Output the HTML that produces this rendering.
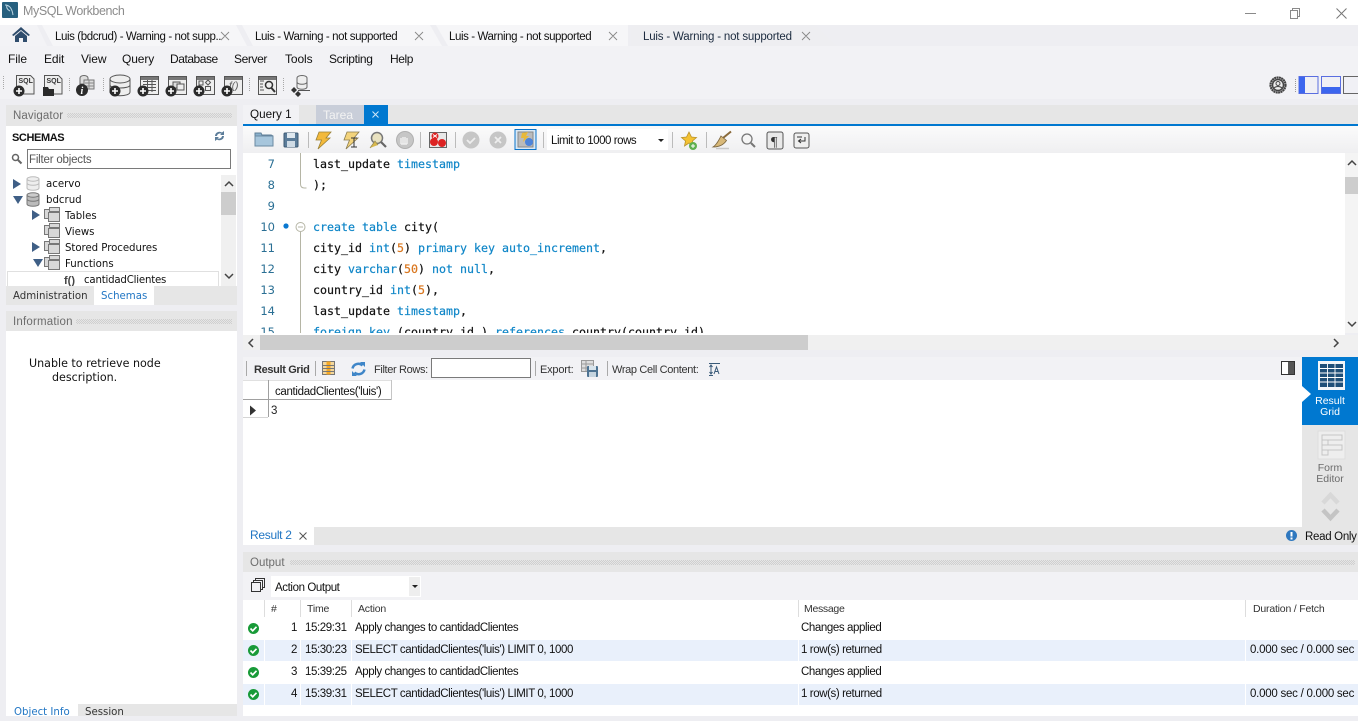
<!DOCTYPE html>
<html><head><meta charset="utf-8"><title>MySQL Workbench</title>
<style>
html,body{margin:0;padding:0;width:1358px;height:716px;overflow:hidden;background:#eeeef2;font-family:"Liberation Sans",sans-serif;font-size:12px;color:#111}
.a{position:absolute}
.t{position:absolute;white-space:pre;line-height:16px;height:16px}
.s{font-size:11.5px;letter-spacing:-.4px}
.r{font-size:11px;letter-spacing:-.35px;color:#333}
.h{font-size:10.5px;letter-spacing:-.2px;color:#333}
.m{font-family:"DejaVu Sans Mono",monospace;font-size:11.63px;line-height:16px;color:#111;position:absolute;white-space:pre;left:313px;-webkit-text-stroke:.2px}
.m b{font-weight:normal;color:#0f86c8}.m i{font-style:normal;color:#d9751c}
.n{font-family:"DejaVu Sans",sans-serif;font-size:11.5px;color:#2a6f94;position:absolute;width:34px;text-align:right;left:241px;line-height:16px}
.d{font-family:"DejaVu Sans",sans-serif;font-size:10.2px}
.hd{position:absolute;background:#e6e6e6;color:#6d6d6d;font-size:12px}
.dots{position:absolute;height:5px;background:conic-gradient(#cfcfcf 25%,transparent 0 50%,#cfcfcf 0 75%,transparent 0);background-size:2px 2px}
.row{position:absolute;left:265px;width:1093px;height:21px;background:#e9f0fb}
.sep{position:absolute;width:1px;background:#a9a9a9}
svg{position:absolute;overflow:visible}
</style></head><body>

<!-- title bar -->
<div class="a" style="left:0;top:0;width:1358px;height:25px;background:#fff"></div>
<svg style="left:2px;top:2px" width="16" height="16" viewBox="0 0 16 16"><rect width="16" height="16" rx="1" fill="#27607f"/><path d="M3 3c4 0 7 3 8 10M5 3c-1 3 1 5 3 6" stroke="#bcd6e3" stroke-width="1" fill="none"/></svg>
<div class="t" style="left:23px;top:3px;font-size:12.5px;letter-spacing:-.42px;color:#8c8c8c">MySQL Workbench</div>
<svg style="left:1245px;top:13px" width="12" height="2"><rect width="11" height="1" fill="#8a8a8a"/></svg>
<svg style="left:1290px;top:8px" width="12" height="11" viewBox="0 0 12 11"><path d="M.5 2.500h7v8h-7zM2.500 2.500v-2h7v8h-2" fill="none" stroke="#8a8a8a"/></svg>
<svg style="left:1336px;top:8px" width="11" height="11" viewBox="0 0 11 11"><path d="M.5.5l10 10M10.500.5l-10 10" stroke="#777" stroke-width="1"/></svg>

<!-- tab strip -->
<div class="a" style="left:0;top:46px;width:1358px;height:53px;background:#f2f2f5"></div>
<svg style="left:0;top:25px" width="1358" height="21">
<path d="M0 0H37L47 21H0Z" fill="#f3f3f6"/>
<path d="M42 0H236L247 21H53Z" fill="#f6f6f8"/>
<path d="M242 0H430L442 21H253Z" fill="#f6f6f8"/>
<path d="M436 0H628V21H448Z" fill="#f6f6f8"/>
<path d="M631 4Q631 0 637 0H815L837 21H631Z" fill="#eeeef1"/>
</svg>
<svg style="left:12px;top:27px" width="18" height="15" viewBox="0 0 18 15"><path d="M0 8L9 0l9 8-1.500 1L9 3 1.500 9z" fill="#2f4d6d"/><path d="M3 9l6-5 6 5v6h-4v-4H7v4H3z" fill="#2f4d6d"/></svg>
<div class="t s" style="left:55px;top:29px">Luis (bdcrud) - Warning - not supp..</div>
<div class="t s" style="left:255px;top:29px">Luis - Warning - not supported</div>
<div class="t s" style="left:449px;top:29px">Luis - Warning - not supported</div>
<div class="t s" style="left:643px;top:29px;color:#1c2b3f;letter-spacing:-.18px">Luis - Warning - not supported</div>
<svg style="left:221px;top:32px" width="600" height="9" fill="none" stroke="#888" stroke-width=".9"><path d="M0 0l8 8M8 0l-8 8M194 0l8 8M202 0l-8 8M388 0l8 8M396 0l-8 8M581 0l8 8M589 0l-8 8"/></svg>

<!-- menu -->
<div class="t" style="left:8px;top:51px;letter-spacing:-.1px">File</div>
<div class="t" style="left:44px;top:51px;letter-spacing:-.1px">Edit</div>
<div class="t" style="left:81px;top:51px;letter-spacing:-.1px">View</div>
<div class="t" style="left:122px;top:51px;letter-spacing:-.1px">Query</div>
<div class="t" style="left:170px;top:51px;letter-spacing:-.45px">Database</div>
<div class="t" style="left:234px;top:51px;letter-spacing:-.4px">Server</div>
<div class="t" style="left:285px;top:51px;letter-spacing:-.1px">Tools</div>
<div class="t" style="left:329px;top:51px;letter-spacing:-.35px">Scripting</div>
<div class="t" style="left:390px;top:51px;letter-spacing:-.4px">Help</div>

<!-- main toolbar -->
<svg style="left:0;top:70px" width="340" height="30" viewBox="0 0 340 30">
<defs>
<g id="plus"><circle r="5.500" fill="#2b2b2b"/><path d="M-3 0h6M0-3v6" stroke="#fff" stroke-width="1.600"/></g>
<g id="win"><rect x=".5" y=".5" width="18" height="18" fill="#eee" stroke="#555"/><rect x="1" y="1" width="17" height="3" fill="#777"/></g>
</defs>
<g stroke="#a8a8a8" stroke-dasharray="1 1" stroke-width="1"><path d="M3.500 6v14M69.500 8v14M103.500 8v14M249.500 8v14M283.500 8v14"/></g>
<path d="M16.500 5.500h14l3.500 3.500v15h-17.500z" fill="#eee" stroke="#555"/><text x="18.500" y="13" font-size="7" font-weight="bold" fill="#333">SQL</text><use href="#plus" x="19" y="21"/>
<path d="M44.500 5.500h14l3.500 3.500v15h-17.500z" fill="#eee" stroke="#555"/><text x="46.500" y="13" font-size="7" font-weight="bold" fill="#333">SQL</text><path d="M43 17h5l1 2h5v7H43z" fill="#2b2b2b"/>
<ellipse cx="84" cy="8" rx="4" ry="2.500" fill="#ddd" stroke="#666"/><path d="M80 8v6h8V8" fill="#ddd" stroke="#666"/><rect x="84" y="10" width="10" height="9" fill="#ddd" stroke="#777"/><path d="M85 13h9M85 16h9M89 10v9" stroke="#888"/><circle cx="82" cy="20" r="6" fill="#2b2b2b"/><text x="80.500" y="24" font-size="10" font-weight="bold" font-style="italic" fill="#fff" font-family="Liberation Serif">i</text>
<path d="M110 9v13c0 5 20 5 20 0V9" fill="#eee" stroke="#555"/><ellipse cx="120" cy="9" rx="10" ry="4" fill="#eee" stroke="#555"/><path d="M110 15c0 4 20 4 20 0" fill="none" stroke="#555"/><use href="#plus" x="115" y="21"/>
<use href="#win" x="140" y="6"/><path d="M143 11.500h13M143 14.500h13M143 17.500h13M143 20.500h13M147.500 10v12M152 10v12" stroke="#555" stroke-width="1"/><use href="#plus" x="143" y="21"/>
<use href="#win" x="168" y="6"/><rect x="173" y="12" width="7" height="6" fill="#ddd" stroke="#555"/><rect x="177" y="14" width="7" height="6" fill="#eee" stroke="#555"/><use href="#plus" x="171" y="21"/>
<use href="#win" x="196" y="6"/><rect x="199" y="11" width="4" height="4" fill="#eee" stroke="#555"/><path d="M208 10l2.500 2.500-2.500 2.500-2.500-2.500z" fill="#eee" stroke="#555"/><rect x="205.500" y="16.500" width="5" height="4" fill="#eee" stroke="#555"/><use href="#plus" x="199" y="21"/>
<use href="#win" x="224" y="6"/><text x="229" y="19" font-size="10" fill="#555" font-style="italic">f()</text><use href="#plus" x="227" y="21"/>
<use href="#win" x="258" y="6"/><path d="M260 11h4M260 14h3M260 17h3M260 20h4" stroke="#555"/><circle cx="269" cy="15" r="3.500" fill="#eee" stroke="#333" stroke-width="1.500"/><path d="M271.500 18l3.500 4" stroke="#333" stroke-width="2"/>
<ellipse cx="302" cy="8" rx="5" ry="2.500" fill="#eee" stroke="#666"/><path d="M297 8v9c0 3 10 3 10 0V8M297 12c0 3 10 3 10 0" fill="#eee" stroke="#666"/><path d="M298 20.500h12" stroke="#555"/><path d="M294 17l3 3-3 3-3-3zM298 21l3 3-3 3-3-3z" fill="#333"/>
</svg>

<!-- right layout toggles -->
<svg style="left:1269px;top:76px" width="89" height="20" viewBox="0 0 89 20">
<circle cx="9" cy="9" r="7.500" fill="none" stroke="#444" stroke-width="2.200" stroke-dasharray="2 .4"/><circle cx="9" cy="9" r="5.500" fill="#eee" stroke="#444" stroke-width="1.500"/><circle cx="9" cy="7.500" r="2" fill="none" stroke="#444"/><path d="M5 12c2-2 6-2 8 0" fill="none" stroke="#444"/>
<path d="M26.500 3v14" stroke="#999" stroke-dasharray="1 1"/>
<rect x="30" y=".5" width="19" height="17" fill="#f0f0f5" stroke="#5a6ee0"/><rect x="30" y="1" width="6" height="16" fill="#3c66ee"/>
<rect x="52.500" y=".5" width="19" height="17" fill="#f0f0f5" stroke="#5a6ee0"/><rect x="53" y="11" width="18" height="6" fill="#3c66ee"/>
<rect x="74.500" y=".5" width="19" height="17" fill="#f0f0f5" stroke="#666"/>
</svg>

<!-- Navigator panel -->
<div class="a" style="left:6px;top:105px;width:231px;height:611px;background:#fff"></div>
<div class="hd" style="left:6px;top:105px;width:231px;height:21px"></div>
<div class="t" style="left:13px;top:108px;color:#6d6d6d;font-size:11.5px;letter-spacing:.1px">Navigator</div>
<div class="dots" style="left:67px;top:113px;width:165px"></div>
<div class="t" style="left:12px;top:130px;font-weight:bold;font-size:11px;letter-spacing:-.4px;color:#111">SCHEMAS</div>
<svg style="left:213px;top:130px" width="13" height="12" viewBox="0 0 13 12"><path d="M2 6a4.500 4.500 0 0 1 7-3.500L11 1v4H7l1.500-1.200A3 3 0 0 0 4 6zM11 6a4.500 4.500 0 0 1-7 3.500L2 11V7h4L4.500 8.200A3 3 0 0 0 9 6z" fill="#5b7c99"/></svg>
<svg style="left:11px;top:153px" width="12" height="12" viewBox="0 0 12 12"><circle cx="4.500" cy="4.500" r="3" fill="none" stroke="#666" stroke-width="1.500"/><path d="M7 7l3.500 3.500" stroke="#666" stroke-width="2"/></svg>
<div class="a" style="left:27px;top:149px;width:202px;height:18px;border:1px solid #7a7a7a;background:#fff"></div>
<div class="t" style="left:29px;top:152px;color:#555;font-size:11.500px;letter-spacing:-.2px">Filter objects</div>

<div class="a" style="left:221px;top:175px;width:15px;height:111px;background:#f0f0f0"></div>
<div class="a" style="left:221px;top:192px;width:15px;height:23px;background:#cdcdcd"></div>
<svg style="left:224px;top:180px" width="10" height="100" fill="none" stroke="#444" stroke-width="1.500"><path d="M1 6l4-4 4 4M1 94l4 4 4-4"/></svg>

<svg style="left:12px;top:176px" width="180" height="100" viewBox="0 0 180 100">
<path d="M1 3l8 5-8 5z" fill="#3f5f86"/><path d="M1 20h10l-5 8z" fill="#3f5f86"/>
<path d="M15 3v9c0 3 12 3 12 0V3" fill="#eee" stroke="#bbb"/><ellipse cx="21" cy="3" rx="6" ry="2.200" fill="#eee" stroke="#bbb"/><path d="M15 7c0 3 12 3 12 0" fill="none" stroke="#bbb"/>
<path d="M15 19v9c0 3 12 3 12 0V19" fill="#bbb" stroke="#777"/><ellipse cx="21" cy="19" rx="6" ry="2.200" fill="#ccc" stroke="#777"/><path d="M15 23c0 3 12 3 12 0" fill="none" stroke="#777"/>
<path d="M20 34l8 5-8 5zM20 66l8 5-8 5z" fill="#3f5f86"/><path d="M21 83h10l-5 8z" fill="#3f5f86"/>
<g fill="#d8d8d8" stroke="#777"><rect x="32.500" y="33.500" width="10" height="9"/><rect x="37.500" y="31.500" width="10" height="4"/><rect x="36.500" y="36.500" width="11" height="9"/>
<rect x="32.500" y="49.500" width="10" height="9"/><rect x="37.500" y="47.500" width="10" height="4"/><rect x="36.500" y="52.500" width="11" height="9"/>
<rect x="32.500" y="65.500" width="10" height="9"/><rect x="37.500" y="63.500" width="10" height="4"/><rect x="36.500" y="68.500" width="11" height="9"/>
<rect x="32.500" y="81.500" width="10" height="9"/><rect x="37.500" y="79.500" width="10" height="4"/><rect x="36.500" y="84.500" width="11" height="9"/></g>
</svg>
<div class="t d" style="left:46px;top:177px">acervo</div>
<div class="t d" style="left:46px;top:193px">bdcrud</div>
<div class="t d" style="left:65px;top:209px">Tables</div>
<div class="t d" style="left:65px;top:225px">Views</div>
<div class="t d" style="left:65px;top:241px;letter-spacing:-.05px">Stored Procedures</div>
<div class="t d" style="left:65px;top:257px">Functions</div>
<div class="a" style="left:7px;top:271px;width:212px;height:15px;border:1px solid #e0e0e0;border-bottom:0;box-sizing:border-box"></div>
<div class="t" style="left:64px;top:273px;font-weight:bold;font-size:11px;color:#444">f()</div>
<div class="t d" style="left:84px;top:273px;letter-spacing:-.2px">cantidadClientes</div>

<div class="a" style="left:6px;top:286px;width:231px;height:19px;background:#e6e6e6"></div>
<div class="a" style="left:94px;top:286px;width:60px;height:19px;background:#fff"></div>
<div class="t d" style="left:13px;top:289px;color:#333">Administration</div>
<div class="t d" style="left:101px;top:289px;color:#2176c4">Schemas</div>
<div class="a" style="left:6px;top:305px;width:231px;height:6px;background:#eeeef2"></div>
<div class="hd" style="left:6px;top:311px;width:231px;height:20px"></div>
<div class="t" style="left:13px;top:314px;color:#6d6d6d;font-size:11.500px;letter-spacing:.2px">Information</div>
<div class="dots" style="left:76px;top:319px;width:156px"></div>
<div class="t d" style="left:29px;top:356px;font-size:11.100px;color:#111">Unable to retrieve node</div>
<div class="t d" style="left:52px;top:370px;font-size:11.100px;color:#111">description.</div>
<div class="a" style="left:6px;top:704px;width:231px;height:12px;background:#e6e6e6"></div>
<div class="a" style="left:6px;top:704px;width:72px;height:12px;background:#fff"></div>
<div class="t d" style="left:14px;top:705px;color:#2176c4">Object Info</div>
<div class="t d" style="left:85px;top:705px;color:#333">Session</div>

<!-- query tab bar -->
<div class="a" style="left:243px;top:105px;width:1115px;height:19px;background:#e6e6e6"></div>
<div class="a" style="left:243px;top:124px;width:1115px;height:2px;background:#0078d0"></div>
<div class="a" style="left:243px;top:105px;width:56px;height:19px;background:#f2f2f5"></div>
<div class="t" style="left:250px;top:107px;font-size:11.700px">Query 1</div>
<div class="a" style="left:316px;top:105px;width:48px;height:19px;background:#c9ced9"></div>
<div class="t" style="left:323px;top:107px;color:#f3f3f3">Tarea</div>
<div class="a" style="left:364px;top:105px;width:24px;height:19px;background:#0078d0"></div>
<svg style="left:372px;top:111px" width="8" height="8"><path d="M.5.5l6 6M6.500.5l-6 6" stroke="#cfe6f7" stroke-width="1"/></svg>

<!-- query toolbar -->
<div class="a" style="left:243px;top:126px;width:1115px;height:27px;background:linear-gradient(#fbfbfb,#efeff1)"></div>
<svg style="left:243px;top:126px" width="580" height="27" viewBox="0 0 580 27">
<path d="M12 7h6l1 2h9c1 0 2 1 2 2v9H12z" fill="#8ab0cc" stroke="#5f7f98"/><rect x="12" y="10" width="18" height="10" fill="#a7c6dc" stroke="#6b8aa2"/>
<rect x="41" y="7" width="14" height="14" rx="1" fill="#5b7c99" stroke="#3e5a74"/><rect x="44" y="7" width="8" height="5" fill="#dfe8ef"/><rect x="44" y="15" width="8" height="6" fill="#cfdbe5"/>
<path d="M65.500 6v16M177.500 6v16M212.500 6v16M300.500 6v16M429.500 6v16M463.500 6v16" stroke="#bbb"/>
<path d="M76 6H88L83 12H87L75 23L78.500 14H73Z" fill="#f3b93b" stroke="#9a8137" stroke-width=".8"/>
<path d="M104 6H116L111 12H115L103 23L106.500 14H101Z" fill="#f3d37b" stroke="#8a7b4d" stroke-width=".8"/><path d="M108 12h6M111 12v9M108 21h6" stroke="#333" stroke-width="1"/>
<circle cx="134" cy="12" r="5.500" fill="#e9e2c0" stroke="#777" stroke-width="1.500"/><path d="M138 16l5 5" stroke="#666" stroke-width="2.200"/><path d="M127 22l5-7 3 4" fill="#d8b84d" stroke="#998d56" stroke-width=".8"/>
<circle cx="162" cy="14" r="8.500" fill="#c6c6c6" stroke="#b0b0b0"/><path d="M158 18v-6M160 18v-7M162 18v-7M164 18v-6M158 18h6" stroke="#eee" stroke-width="1.500"/>
<rect x="186.500" y="6.500" width="17" height="15" fill="#e8e8e8" stroke="#666"/><circle cx="192" cy="10" r="3.500" fill="#d22"/><circle cx="191" cy="16" r="4" fill="#d22"/><circle cx="199" cy="17" r="4" fill="#d22"/><path d="M190 8.500l4 3M194 8.500l-4 3" stroke="#fff"/>
<circle cx="228" cy="14" r="8.500" fill="#c6c6c6"/><path d="M224 14l3 3 5-5" stroke="#eee" stroke-width="1.800" fill="none"/>
<circle cx="255" cy="14" r="8.500" fill="#c6c6c6"/><path d="M252 11l6 6M258 11l-6 6" stroke="#eee" stroke-width="1.800"/>
<rect x="272" y="3.500" width="21" height="20" fill="#d9e8f5" stroke="#0a73c9"/><rect x="275" y="6" width="15" height="15" fill="#bbb" stroke="#888"/><path d="M279 7l6-1-2 4h3l-6 6 1-4h-3z" fill="#e8b93a"/><circle cx="286" cy="16" r="4" fill="#4d84da"/>
<rect x="304" y="3" width="121" height="21" fill="#fff"/>
<path d="M415 13h6l-3 3z" fill="#222"/>
<path d="M446 6l2.500 5 5 .5-4 3.500 1 5-4.500-3-4.500 3 1-5-4-3.500 5-.5z" fill="#f4c233" stroke="#b8922b" stroke-width=".8"/><circle cx="450" cy="20" r="4" fill="#5fb04f"/><path d="M448 20h4M450 18v4" stroke="#fff"/>
<path d="M488 5.500l-8 6.500" stroke="#8a6a3a" stroke-width="2"/><path d="M478 10l5.500 4.500c-3 4.500-8 6.500-13.500 6.500 3.500-2 5.500-6.500 8-11z" fill="#d8b878" stroke="#7b6640" stroke-width=".8"/><path d="M473 22.500h13" stroke="#c8c8c8" stroke-width="1.500"/>
<circle cx="504" cy="13" r="5" fill="#f5f5f5" stroke="#777" stroke-width="1.300"/><path d="M508 17l4 4" stroke="#777" stroke-width="2"/>
<rect x="524" y="6" width="16" height="17" rx="2" fill="#e9e9e9" stroke="#555"/><text x="528" y="20" font-size="14" fill="#333" font-family="Liberation Serif">¶</text>
<rect x="551" y="7" width="15" height="15" rx="2" fill="#efefef" stroke="#555"/><path d="M562 11v4h-6M558 13l-2.500 2 2.500 2M554 11h5" fill="none" stroke="#333" stroke-width="1"/>
</svg>
<div class="t" style="left:551px;top:133px;font-size:11.500px;letter-spacing:-.45px">Limit to 1000 rows</div>

<!-- editor -->
<div class="a" style="left:243px;top:153px;width:1102px;height:182px;background:#fff;overflow:hidden"></div>
<div class="n" style="top:156px">7</div><div class="m" style="top:156px">last_update <b>timestamp</b></div>
<div class="n" style="top:177px">8</div><div class="m" style="top:177px">);</div>
<div class="n" style="top:198px">9</div>
<div class="n" style="top:219px">10</div><div class="m" style="top:219px"><b>create</b> <b>table</b> city(</div>
<div class="n" style="top:240px">11</div><div class="m" style="top:240px">city_id <b>int</b>(<i>5</i>) <b>primary</b> <b>key</b> <b>auto_increment</b>,</div>
<div class="n" style="top:261px">12</div><div class="m" style="top:261px">city <b>varchar</b>(<i>50</i>) <b>not</b> <b>null</b>,</div>
<div class="n" style="top:282px">13</div><div class="m" style="top:282px">country_id <b>int</b>(<i>5</i>),</div>
<div class="n" style="top:303px">14</div><div class="m" style="top:303px">last_update <b>timestamp</b>,</div>
<div class="a" style="left:243px;top:324px;width:1102px;height:9px;overflow:hidden">
<div class="n" style="top:0;left:-2px">15</div><div class="m" style="top:0;left:70px"><b>foreign</b> <b>key</b> (country_id ) <b>references</b> country(country_id)</div></div>
<svg style="left:280px;top:153px" width="30" height="180" viewBox="0 0 30 180" fill="none" stroke="#b5b5a5">
<path d="M20.500 0v31q0 4 4 4h2"/><circle cx="20.500" cy="74" r="4.500"/><path d="M18 74h5M20.500 79v101"/><circle cx="6" cy="73" r="2.600" fill="#0a78d0" stroke="none"/></svg>

<!-- editor scrollbars -->
<div class="a" style="left:1345px;top:153px;width:13px;height:180px;background:#f4f4f4"></div>
<div class="a" style="left:1345px;top:177px;width:13px;height:17px;background:#cdcdcd"></div>
<svg style="left:1347px;top:159px" width="10" height="170" fill="none" stroke="#444" stroke-width="1.500"><path d="M1 6l4-4 4 4M1 163l4 4 4-4"/></svg>
<div class="a" style="left:243px;top:335px;width:1115px;height:15px;background:#f0f0f0"></div>
<div class="a" style="left:260px;top:335px;width:548px;height:15px;background:#cdcdcd"></div>
<svg style="left:248px;top:338px" width="1095" height="10" fill="none" stroke="#444" stroke-width="1.500"><path d="M5 1L1 5l4 4M1086 1l4 4-4 4"/></svg>

<!-- result toolbar -->
<div class="a" style="left:243px;top:357px;width:1059px;height:23px;background:#f2f2f5"></div>
<div class="a" style="left:243px;top:380px;width:1059px;height:147px;background:#fff"></div>
<div class="sep" style="left:246px;top:361px;height:15px"></div>
<div class="t" style="left:254px;top:362px;font-size:11px;letter-spacing:-.35px;font-weight:bold;color:#333">Result Grid</div>
<div class="sep" style="left:315px;top:361px;height:15px"></div>
<svg style="left:322px;top:361px" width="14" height="15" viewBox="0 0 14 15"><rect x=".5" y=".5" width="12" height="13" fill="#f4d79b" stroke="#777"/><rect x="4.500" y=".5" width="4" height="13" fill="#f7a823"/><path d="M1 4.500h11M1 7.500h11M1 10.500h11" stroke="#777"/></svg>
<svg style="left:350px;top:362px" width="17" height="14" viewBox="0 0 17 14" fill="none" stroke="#3f86c8" stroke-width="2.500"><path d="M2.500 6.500a6 6 0 0 1 10-3"/><path d="M14.500 7.500a6 6 0 0 1-10 3"/><path d="M10 0h5v5zM7 14H2V9z" fill="#3f86c8" stroke="none"/></svg>
<div class="t r" style="left:374px;top:362px">Filter Rows:</div>
<div class="a" style="left:431px;top:358px;width:98px;height:18px;border:1px solid #7a7a7a;background:#fff"></div>
<div class="sep" style="left:535px;top:361px;height:15px"></div>
<div class="t r" style="left:540px;top:362px;letter-spacing:-.2px">Export:</div>
<svg style="left:581px;top:360px" width="18" height="17" viewBox="0 0 18 17"><rect x=".5" y=".5" width="12" height="11" fill="#ddd" stroke="#999"/><path d="M1 4h11M1 8h11M5 1v10" stroke="#999"/><rect x="6" y="6" width="11" height="11" rx="1" fill="#4d7392"/><rect x="8" y="6" width="7" height="4" fill="#d8e4ec"/><rect x="8" y="12" width="7" height="5" fill="#c5d4df"/></svg>
<div class="sep" style="left:607px;top:361px;height:15px"></div>
<div class="t r" style="left:612px;top:362px">Wrap Cell Content:</div>
<svg style="left:708px;top:363px" width="14" height="13" viewBox="0 0 14 13" fill="none" stroke="#395a78"><path d="M1 .5h11M1 12.500h4M3 2v9M1.500 4L3 2l1.500 2M1.500 9L3 11l1.500-2"/><path d="M6 11l2.500-7L11 11M7 8.500h3"/></svg>
<svg style="left:1281px;top:361px" width="14" height="14"><rect x=".5" y=".5" width="13" height="13" fill="#fff" stroke="#333"/><rect x="7" y="1" width="6" height="12" fill="#555"/></svg>

<!-- grid -->
<div class="a" style="left:243px;top:380px;width:149px;height:20px;border-bottom:1px solid #a0a0a0;border-top:1px solid #e0e0e0;box-sizing:border-box"></div>
<div class="a" style="left:268px;top:380px;width:1px;height:37px;background:#a0a0a0"></div>
<div class="a" style="left:391px;top:380px;width:1px;height:20px;background:#c5c5c5"></div>
<div class="a" style="left:243px;top:417px;width:25px;height:1px;background:#d5d5d5"></div>
<div class="t" style="left:275px;top:384px;font-size:11.500px;letter-spacing:-.33px">cantidadClientes('luis')</div>
<svg style="left:250px;top:405px" width="7" height="11"><path d="M0 .5l6 5-6 5z" fill="#333"/></svg>
<div class="t" style="left:271px;top:403px;font-size:11.500px;color:#222">3</div>

<!-- right side panel -->
<div class="a" style="left:1302px;top:357px;width:56px;height:170px;background:#e6e6e6"></div>
<div class="a" style="left:1302px;top:357px;width:56px;height:68px;background:#0078d0"></div>
<svg style="left:1302px;top:357px" width="56" height="170" viewBox="0 0 56 170">
<path d="M0 29L9 37L0 45z" fill="#fff"/>
<rect x="16" y="4" width="27" height="29" fill="#f3f6f9"/><rect x="18" y="7" width="23" height="23" fill="#1f4f78"/><path d="M18 11.500h23M18 16h23M18 20.500h23M18 25h23M25.500 7v23M33 7v23" stroke="#fff" stroke-width=".9"/>
<rect x="16" y="74" width="27" height="28" fill="#eee" stroke="#ddd"/><path d="M20 78h20v5H26v5h14v5H26v5h-6zM20 83h6M20 88h6M20 93h6" fill="none" stroke="#c5c5c5"/>
<path d="M21 146L28.500 138L36 146" fill="none" stroke="#d8d8d8" stroke-width="4.500"/>
<path d="M21 153L28.500 161L36 153" fill="none" stroke="#c4c4c4" stroke-width="4.500"/>
</svg>
<div class="t" style="left:1302px;top:396px;width:56px;text-align:center;color:#fff;font-size:10.500px;line-height:11px">Result<br>Grid</div>
<div class="t" style="left:1302px;top:463px;width:56px;text-align:center;color:#6b6b6b;font-size:10.500px;line-height:11px">Form<br>Editor</div>

<!-- result tabs -->
<div class="a" style="left:243px;top:527px;width:1115px;height:18px;background:#e6e6e6"></div>
<div class="a" style="left:243px;top:527px;width:71px;height:18px;background:#fff"></div>
<div class="t" style="left:250px;top:527px;color:#2176c4;letter-spacing:-.3px">Result 2</div>
<svg style="left:299px;top:532px" width="9" height="9"><path d="M.5.500l7 7M7.500.5l-7 7" stroke="#555" stroke-width="1"/></svg>
<svg style="left:1286px;top:530px" width="11" height="11"><circle cx="5.500" cy="5.500" r="5.500" fill="#2f78bf"/><rect x="4.500" y="2" width="2" height="4.500" fill="#fff"/><rect x="4.500" y="7.500" width="2" height="2" fill="#fff"/></svg>
<div class="t" style="left:1305px;top:529px;font-size:11.500px;letter-spacing:-.3px">Read Only</div>

<!-- output panel -->
<div class="hd" style="left:243px;top:552px;width:1115px;height:20px"></div>
<div class="t" style="left:250px;top:555px;color:#6d6d6d;font-size:11.500px">Output</div>
<div class="dots" style="left:290px;top:560px;width:1065px"></div>
<div class="a" style="left:243px;top:572px;width:1115px;height:28px;background:#f2f2f5"></div>
<svg style="left:251px;top:578px" width="14" height="15" fill="none" stroke="#333"><path d="M.5 4.500h9v9h-9zM2.500 4V2.500h9v9H10M4.500 2V.5h9v9H12"/></svg>
<div class="a" style="left:271px;top:576px;width:150px;height:21px;background:#fff"></div>
<div class="a" style="left:409px;top:577px;width:11px;height:19px;background:#eee"></div>
<svg style="left:412px;top:585px" width="6" height="4"><path d="M0 0h6L3 3z" fill="#222"/></svg>
<div class="t s" style="left:275px;top:580px">Action Output</div>

<div class="a" style="left:243px;top:600px;width:1115px;height:116px;background:#fff"></div>
<div class="sep" style="left:264px;top:600px;height:17px;background:#ddd"></div>
<div class="sep" style="left:300px;top:600px;height:17px;background:#ddd"></div>
<div class="sep" style="left:351px;top:600px;height:17px;background:#ddd"></div>
<div class="sep" style="left:798px;top:600px;height:17px;background:#ddd"></div>
<div class="sep" style="left:1245px;top:600px;height:17px;background:#ddd"></div>
<div class="t h" style="left:271px;top:601px">#</div>
<div class="t h" style="left:307px;top:601px">Time</div>
<div class="t h" style="left:358px;top:601px">Action</div>
<div class="t h" style="left:804px;top:601px;letter-spacing:-.3px">Message</div>
<div class="t h" style="left:1253px;top:601px">Duration / Fetch</div>

<div class="row" style="top:640px"></div><div class="row" style="top:684px"></div>
<div class="a" style="left:243px;top:640px;width:21px;height:21px;background:#e9f0fb"></div>
<div class="a" style="left:243px;top:684px;width:21px;height:21px;background:#e9f0fb"></div>
<div class="sep" style="left:264px;top:617px;height:88px;background:#fff"></div>
<div class="sep" style="left:300px;top:617px;height:88px;background:#fff"></div>
<div class="sep" style="left:351px;top:617px;height:88px;background:#fff"></div>
<div class="sep" style="left:798px;top:617px;height:88px;background:#fff"></div>
<div class="sep" style="left:1245px;top:617px;height:88px;background:#fff"></div>

<svg style="left:248px;top:622px" width="12" height="78" viewBox="0 0 12 78">
<defs><g id="ok"><circle cx="5.500" cy="5.500" r="5.500" fill="#189a38"/><path d="M2.500 5.500l2.200 2.300 3.800-4" fill="none" stroke="#fff" stroke-width="1.700"/></g></defs>
<use href="#ok" y="1"/><use href="#ok" y="23"/><use href="#ok" y="45"/><use href="#ok" y="67"/></svg>

<div class="t s" style="left:291px;top:620px">1</div><div class="t s" style="left:305px;top:620px">15:29:31</div><div class="t s" style="left:355px;top:620px">Apply changes to cantidadClientes</div><div class="t s" style="left:801px;top:620px">Changes applied</div>
<div class="t s" style="left:291px;top:642px">2</div><div class="t s" style="left:305px;top:642px">15:30:23</div><div class="t s" style="left:355px;top:642px">SELECT cantidadClientes('luis') LIMIT 0, 1000</div><div class="t s" style="left:801px;top:642px">1 row(s) returned</div><div class="t s" style="left:1250px;top:642px;letter-spacing:-.25px">0.000 sec / 0.000 sec</div>
<div class="t s" style="left:291px;top:664px">3</div><div class="t s" style="left:305px;top:664px">15:39:25</div><div class="t s" style="left:355px;top:664px">Apply changes to cantidadClientes</div><div class="t s" style="left:801px;top:664px">Changes applied</div>
<div class="t s" style="left:291px;top:686px">4</div><div class="t s" style="left:305px;top:686px">15:39:31</div><div class="t s" style="left:355px;top:686px">SELECT cantidadClientes('luis') LIMIT 0, 1000</div><div class="t s" style="left:801px;top:686px">1 row(s) returned</div><div class="t s" style="left:1250px;top:686px;letter-spacing:-.25px">0.000 sec / 0.000 sec</div>

</body></html>
